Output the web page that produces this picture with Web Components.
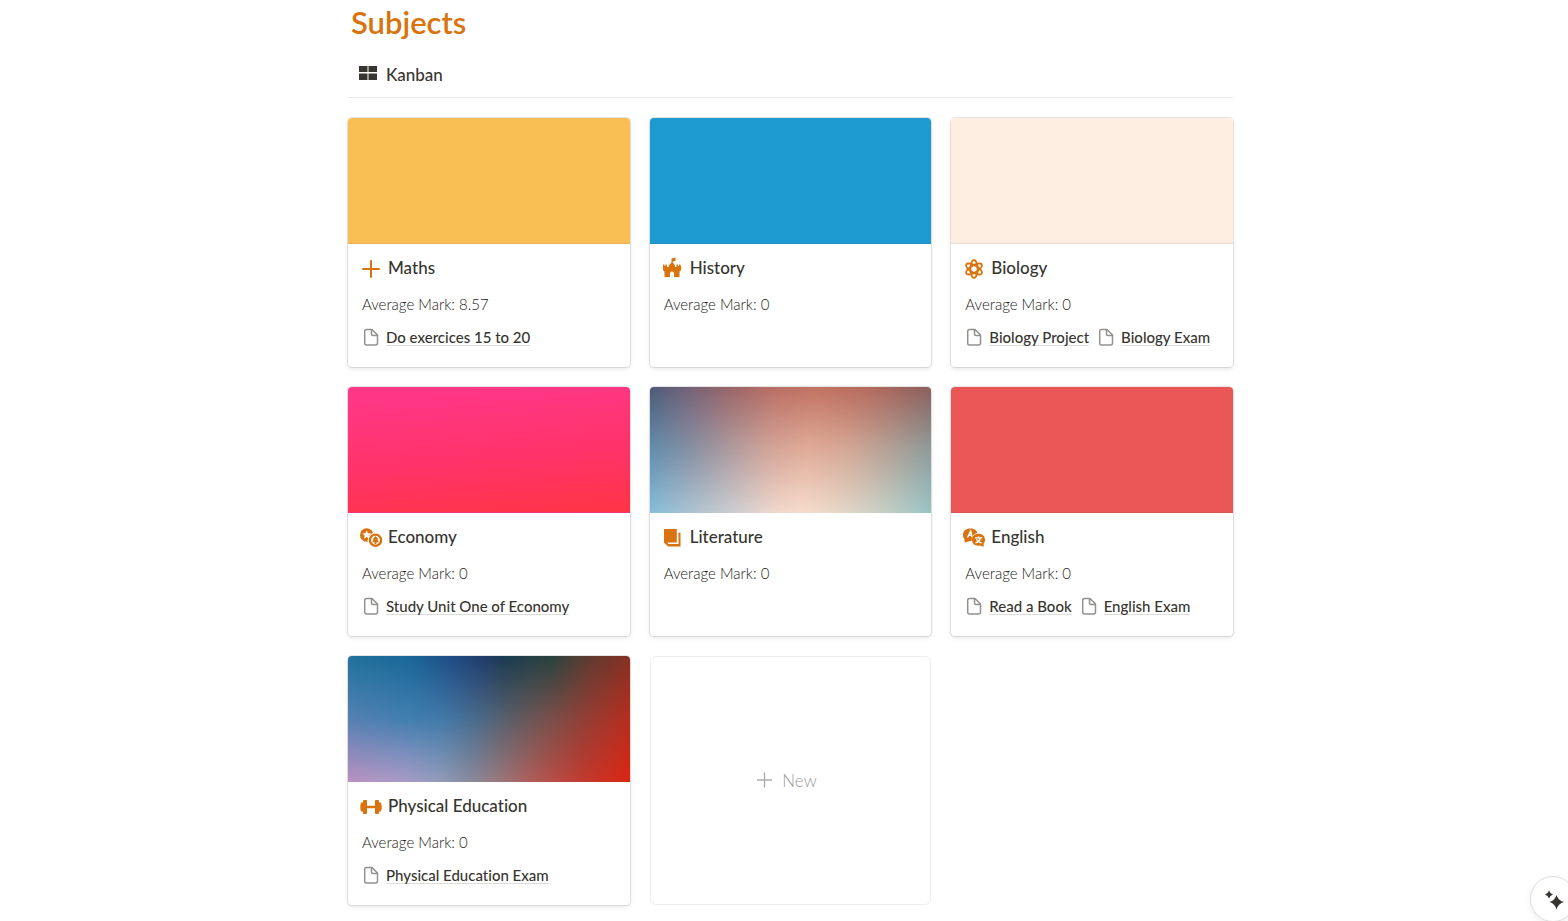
<!DOCTYPE html>
<html lang="en">
<head>
<meta charset="utf-8">
<meta name="viewport" content="width=device-width, initial-scale=1">
<title>Subjects</title>
<style>
  body { margin: 0; background: #fff; color: #37352f; font-family: Lato, "Open Sans", sans-serif; font-variant-ligatures: none; }
</style>
</head>
<body>
<subject-board heading="Subjects">
  <view-tab slot="tabs">Kanban</view-tab>
  <subject-card icon="plus" cover="amber" mark="8.57">Maths<page-link slot="pages">Do exercices 15 to 20</page-link></subject-card>
  <subject-card icon="castle" cover="blue" mark="0">History</subject-card>
  <subject-card icon="atom" cover="cream" mark="0">Biology<page-link slot="pages">Biology Project</page-link><page-link slot="pages">Biology Exam</page-link></subject-card>
  <subject-card icon="coins" cover="pink" mark="0">Economy<page-link slot="pages">Study Unit One of Economy</page-link></subject-card>
  <subject-card icon="book" cover="dawn" mark="0">Literature</subject-card>
  <subject-card icon="translate" cover="red" mark="0">English<page-link slot="pages">Read a Book</page-link><page-link slot="pages">English Exam</page-link></subject-card>
  <subject-card icon="dumbbell" cover="dusk" mark="0">Physical Education<page-link slot="pages">Physical Education Exam</page-link></subject-card>
  <new-card>New</new-card>
</subject-board>
<assistant-button></assistant-button>

<script>
const ICONS = {
  plus: '<path d="M11 4v16M3 12h16" fill="none" stroke="currentColor" stroke-width="2" stroke-linecap="round"/>',
  castle: '<path d="M9.500 1.500L13.500 0.600V4L10.800 4.500V5.500L13 8.500V10H14.500V7.500H16V9H17V7.500H18.500V9H19.200V13L17.500 14.500V20H12V16.500Q12 14.500 10 14.500T8 16.500V20H2.500V14.500L1 13V7.500H2.500V9H3.500V7.500H5V10H6.700V8.500L9.500 5.500Z" fill="currentColor"/>',
  atom: '<g fill="none" stroke="currentColor" stroke-width="1.800"><ellipse cx="11" cy="12" rx="3.600" ry="9"/><ellipse cx="11" cy="12" rx="3.600" ry="9" transform="rotate(60 11 12)"/><ellipse cx="11" cy="12" rx="3.600" ry="9" transform="rotate(120 11 12)"/></g><circle cx="11" cy="12" r="2" fill="#fff"/>',
  coins: '<circle cx="6.700" cy="9" r="6.700" fill="currentColor"/><path d="M6.700 4.500l1.300 2.800 3.200.3-2.500 2 .8 3.200-2.800-1.700-2.800 1.700.8-3.200-2.500-2 3.200-.3z" fill="#fff"/><circle cx="15.500" cy="14.200" r="7.800" fill="#fff"/><circle cx="15.500" cy="14.200" r="5.600" fill="#fff" stroke="currentColor" stroke-width="2.300"/><path d="M15.500 10l3 3.500h-1.200l1.700 2.700h-2.500v2h-2v-2H12l1.700-2.700h-1.200z" fill="currentColor"/>',
  book: '<path d="M2 3H14.800V16.500H5.500L6.500 18H16.500V6.500H18.500V20.500H6L2 16.500z" fill="currentColor"/>',
  translate: '<path d="M7.500 2.500C12 2.500 14.500 5 14.500 8.500S11.500 15 7.500 15L1.500 16.500V13C.3 11.800 0 10.500 0 8.700 0 5 3 2.500 7.500 2.500z" fill="currentColor"/><path d="M4.500 11.500L7.700 5.200L9 11M5.500 9.300h3" fill="none" stroke="#fff" stroke-width="1.500"/><circle cx="15.700" cy="13.800" r="7" fill="#fff"/><path d="M15.500 7.800c4 0 6.500 2.500 6.500 6 0 1.500-.5 2.700-1.300 3.700V20.800L17 19.600c-5 1-8-2-8-5.800 0-3.500 2.500-6 6.500-6z" fill="currentColor"/><path d="M12 11.900h7.200M15.600 10.200v1.700M12.500 17q4-1.500 5-5M13.500 13.200q1.500 3 5.200 3.900" fill="none" stroke="#fff" stroke-width="1.300"/>',
  dumbbell: '<path d="M3.500 5.500h3v13h-3v-2.500H1.200v-1.800H.9v-4.400h.3V8h2.300zM15.500 5.500h3V8h2.300v1.800h.3v4.400h-.3V16h-2.300v2.500h-3z" fill="currentColor" stroke="currentColor" stroke-width="1" stroke-linejoin="round"/><path d="M6 10.700h10v2.600H6z" fill="currentColor"/>'
};

function define(name, html, setup) {
  const template = document.createElement('template');
  template.innerHTML = html;
  customElements.define(name, class extends HTMLElement {
    constructor() {
      super();
      this.attachShadow({ mode: 'open' }).append(template.content.cloneNode(true));
    }
    connectedCallback() { if (setup) setup(this, this.shadowRoot); }
  });
}

define('subject-board', `
<style>
  :host { display: block; padding: 0 0 16px 13px; }
  main { max-width: 885px; margin: 0 auto; }
  h1 { margin: 0; padding: 2px 3px 1px; font-size: 31px; line-height: 40px; font-weight: 600; color: #d9730d; }
  nav { display: flex; height: 42px; padding: 12px 10px 0; border-bottom: 1px solid #e9e9e7; }
  section { display: grid; grid-template-columns: repeat(auto-fill, minmax(260px, 1fr)); gap: 20px; padding-top: 20px; }
</style>
<main>
  <h1></h1>
  <nav><slot name="tabs"></slot></nav>
  <section><slot></slot></section>
</main>`, (host, root) => { root.querySelector('h1').textContent = host.getAttribute('heading'); });

define('view-tab', `
<style>
  :host { display: block; height: 40px; }
  button { display: flex; gap: 8px; align-items: center; height: 40px; padding: 0; border: 0; background: none; color: inherit; font-family: inherit; font-size: 17px; font-weight: 500; line-height: 40px; }
  svg { width: 20px; height: 20px; }
</style>
<button type="button"><svg viewBox="0 0 20 20" aria-hidden="true"><path d="M1 1h8.500v6H1zM10.500 1H19v6h-8.500zM1 8.500h8.500V15H1zM10.500 8.500H19V15h-8.500z" fill="currentColor"/></svg><slot></slot></button>`);

define('subject-card', `
<style>
  :host { display: flex; flex-direction: column; min-height: 249px; border-radius: 4px; overflow: hidden; background: #fff; box-shadow: 0 0 0 1px rgba(15,15,15,.1), 0 2px 4px rgba(15,15,15,.1); }
  .cover { display: grid; height: 125px; border-bottom: 1px solid rgba(55,53,47,.09); }
  .cover i { grid-area: 1 / 1; margin-bottom: -1px; }
  .mid { mask-image: linear-gradient(transparent, #000 50%); }
  .low { mask-image: linear-gradient(transparent 50%, #000); }
  :host([cover=amber]) .cover { background: #f9bf54; }
  :host([cover=blue]) .cover { background: #1d9acf; }
  :host([cover=cream]) .cover { background: #feeee2; }
  :host([cover=red]) .cover { background: #eb5757; }
  :host([cover=pink]) .cover { background: linear-gradient(175deg, #ff3785 10%, #ff3368 58%, #ff3447 98%); }
  :host([cover=dawn]) .top { background: linear-gradient(90deg, #4c5b77, #70627a 12%, #996669 28%, #b96f65 44%, #c27362 60%, #b56b5e 78%, #8b605d); }
  :host([cover=dawn]) .mid { background: linear-gradient(90deg, #648eae, #8991a3 15%, #b39c9f 30%, #d3a599 43%, #e0ac99 56%, #d5a896 70%, #b3a297 85%, #8e9c9b); }
  :host([cover=dawn]) .low { background: linear-gradient(90deg, #86bdd9, #adc3d1 15%, #cdcdd0 30%, #efd7cc 44%, #f7dccd 54%, #e8d8c8 66%, #c8d0c5 82%, #98c4c7); }
  :host([cover=dusk]) .top { background: linear-gradient(90deg, #20729c, #1a6799 22%, #1f4a82 38%, #203c6b 48%, #1b3c50 56%, #29433f 72%, #593d33 84%, #873123); }
  :host([cover=dusk]) .mid { background: linear-gradient(90deg, #5581b2, #417fb0 22%, #4279a8 34%, #4b6a89 46%, #5d5e66 58%, #76524e 70%, #933f36 84%, #b72d1f); }
  :host([cover=dusk]) .low { background: linear-gradient(90deg, #bb91c0, #a99bc7 20%, #939cba 32%, #898b9f 43%, #987b80 52%, #b05b57 66%, #c03c31 82%, #db2612); }
  .body { display: flex; flex-direction: column; padding: 12px; }
  h2 { display: flex; align-items: center; gap: 6px; margin: 0; font-size: 17px; line-height: 24px; font-weight: 500; }
  h2 svg { width: 22px; height: 22px; color: #d9730d; overflow: visible; }
  p { margin: 14px 2px 13px; color: #1c1a15; font-size: 15px; font-weight: 300; line-height: 20px; }
  .pages { display: flex; flex-wrap: wrap; gap: 8px; padding: 0 2px; }
</style>
<div class="cover"><i class="top"></i><i class="mid"></i><i class="low"></i></div>
<div class="body">
  <h2><svg viewBox="0 0 22 22" aria-hidden="true"></svg><span><slot></slot></span></h2>
  <p></p>
  <div class="pages"><slot name="pages"></slot></div>
</div>`, (host, root) => {
  root.querySelector('svg').innerHTML = ICONS[host.getAttribute('icon')];
  root.querySelector('p').textContent = 'Average Mark: ' + host.getAttribute('mark');
});

define('page-link', `
<style>
  :host { display: block; }
  a { display: flex; align-items: center; gap: 6px; color: inherit; text-decoration: none; font-size: 15px; font-weight: 500; line-height: 20px; white-space: nowrap; }
  svg { width: 18px; height: 20px; }
  span { line-height: 16px; border-bottom: 1px solid #dcdcda; }
</style>
<a href="#"><svg viewBox="0 0 18 20" aria-hidden="true"><path d="M4.500 2.500H10l5.500 5.500V16Q15.500 18 13.500 18H4.500Q2.700 18 2.700 16V4.500Q2.700 2.500 4.500 2.500zM9.500 3V7Q9.500 8.500 11 8.500H15" fill="none" stroke="#91918e" stroke-width="1.500" stroke-linejoin="round"/></svg><span><slot></slot></span></a>`);

define('new-card', `
<style>
  :host { display: grid; min-height: 249px; }
  button { display: flex; align-items: center; justify-content: center; gap: 8px; margin: 0; padding: 0 8px 0 0; border: 1px solid #ededec; border-radius: 6px; background: #fff; color: #9c9b99; font-family: inherit; font-size: 17px; font-weight: 300; line-height: 24px; }
  svg { width: 18px; height: 18px; }
</style>
<button type="button"><svg viewBox="0 0 18 18" aria-hidden="true"><path d="M8.500 1v14M1.500 8h14" fill="none" stroke="#acaba9" stroke-width="1.300" stroke-linecap="round"/></svg><slot></slot></button>`);

define('assistant-button', `
<style>
  :host { position: fixed; right: -8px; bottom: -1px; }
  button { display: grid; place-items: center; width: 46px; height: 46px; padding: 0; border: 1px solid #dededd; border-radius: 50%; background: #fff; color: #37352f; box-shadow: 0 2px 6px rgba(15,15,15,.08); }
  svg { width: 24px; height: 24px; }
</style>
<button type="button" aria-label="Assistant"><svg viewBox="0 0 24 24" aria-hidden="true"><path d="M8 3.500Q9 6.700 12 7.500Q9 8.500 8 11.500Q7 8.500 4 7.500Q7 6.700 8 3.500zM15.500 8Q17 13.300 23 15Q17 16.700 15.500 22.500Q14 16.700 8.500 15Q14 13.300 15.500 8z" fill="currentColor"/></svg></button>`);
</script>
</body>
</html>
